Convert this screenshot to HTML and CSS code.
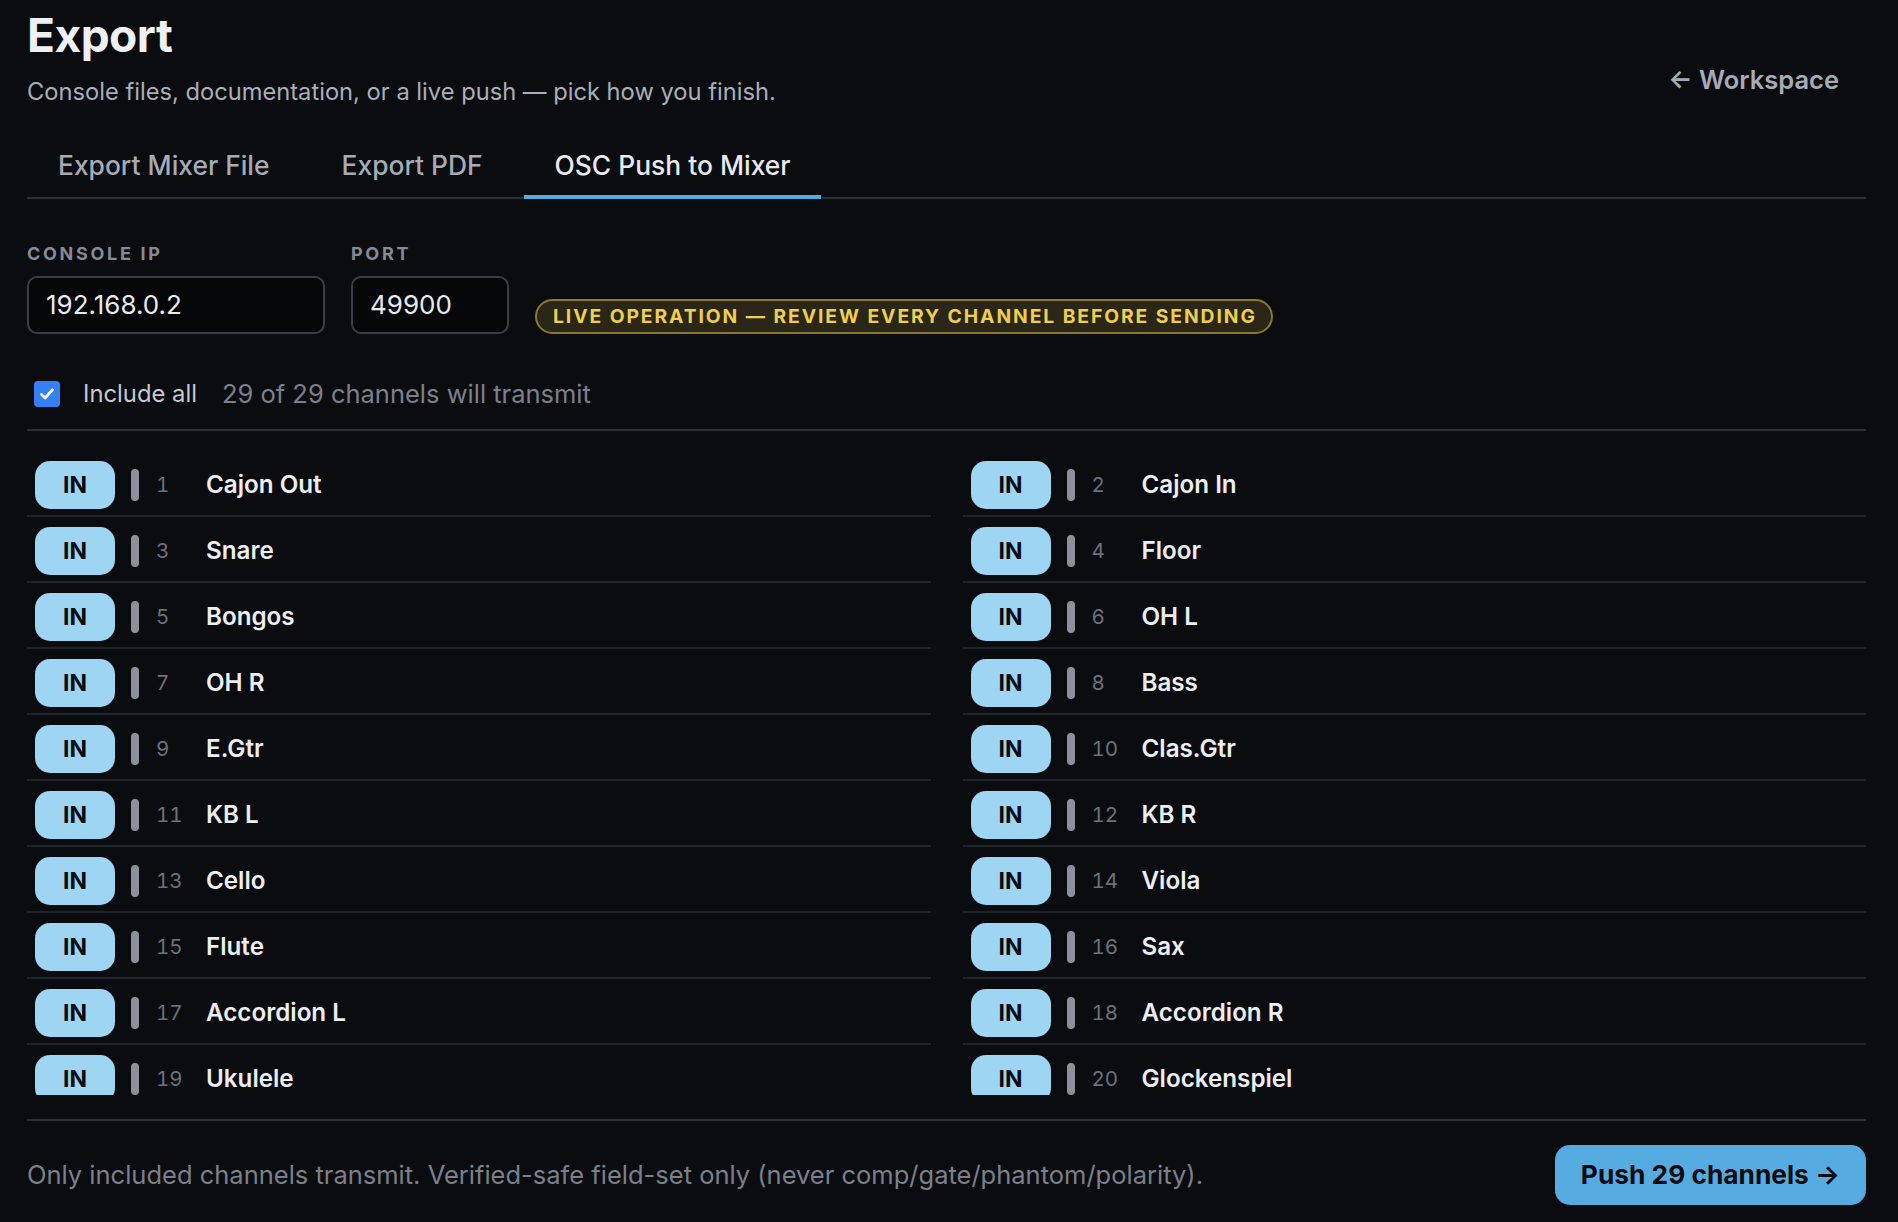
FILE: index.html
```html
<!DOCTYPE html>
<html lang="en">
<head>
  <meta charset="UTF-8">
  <meta name="viewport" content="width=device-width, initial-scale=1.0">
  <title>Export</title>
  <link rel="stylesheet" href="styles.css">
</head>
<body>
  <div class="page">
    <header class="header">
      <div>
        <h1 class="title">Export</h1>
        <p class="subtitle">Console files, documentation, or a live push — pick how you finish.</p>
      </div>
      <a class="back-link" href="#">← Workspace</a>
    </header>

    <nav class="tabs">
      <button class="tab">Export Mixer File</button>
      <button class="tab">Export PDF</button>
      <button class="tab active">OSC Push to Mixer</button>
    </nav>

    <div class="connection">
      <label class="field">
        <span class="field-label">Console IP</span>
        <input class="field-input ip" type="text" value="192.168.0.2">
      </label>
      <label class="field">
        <span class="field-label">Port</span>
        <input class="field-input port" type="text" value="49900">
      </label>
      <span class="warning">Live operation — review every channel before sending</span>
    </div>

    <div class="include-row">
      <span class="check">
        <svg width="18" height="18" viewBox="0 0 18 18"><path d="M3.5 9.5 L7.2 13 L14.5 4.8" fill="none" stroke="#fff" stroke-width="2.8" stroke-linecap="round" stroke-linejoin="round"/></svg>
      </span>
      <span class="include-label">Include all</span>
      <span class="include-count">29 of 29 channels will transmit</span>
    </div>

    <div class="channels">
      <div class="channel"><button class="in-btn">IN</button><span class="bar"></span><span class="num">1</span><span class="name">Cajon Out</span></div>
      <div class="channel"><button class="in-btn">IN</button><span class="bar"></span><span class="num">2</span><span class="name">Cajon In</span></div>
      <div class="channel"><button class="in-btn">IN</button><span class="bar"></span><span class="num">3</span><span class="name">Snare</span></div>
      <div class="channel"><button class="in-btn">IN</button><span class="bar"></span><span class="num">4</span><span class="name">Floor</span></div>
      <div class="channel"><button class="in-btn">IN</button><span class="bar"></span><span class="num">5</span><span class="name">Bongos</span></div>
      <div class="channel"><button class="in-btn">IN</button><span class="bar"></span><span class="num">6</span><span class="name">OH L</span></div>
      <div class="channel"><button class="in-btn">IN</button><span class="bar"></span><span class="num">7</span><span class="name">OH R</span></div>
      <div class="channel"><button class="in-btn">IN</button><span class="bar"></span><span class="num">8</span><span class="name">Bass</span></div>
      <div class="channel"><button class="in-btn">IN</button><span class="bar"></span><span class="num">9</span><span class="name">E.Gtr</span></div>
      <div class="channel"><button class="in-btn">IN</button><span class="bar"></span><span class="num">10</span><span class="name">Clas.Gtr</span></div>
      <div class="channel"><button class="in-btn">IN</button><span class="bar"></span><span class="num">11</span><span class="name">KB L</span></div>
      <div class="channel"><button class="in-btn">IN</button><span class="bar"></span><span class="num">12</span><span class="name">KB R</span></div>
      <div class="channel"><button class="in-btn">IN</button><span class="bar"></span><span class="num">13</span><span class="name">Cello</span></div>
      <div class="channel"><button class="in-btn">IN</button><span class="bar"></span><span class="num">14</span><span class="name">Viola</span></div>
      <div class="channel"><button class="in-btn">IN</button><span class="bar"></span><span class="num">15</span><span class="name">Flute</span></div>
      <div class="channel"><button class="in-btn">IN</button><span class="bar"></span><span class="num">16</span><span class="name">Sax</span></div>
      <div class="channel"><button class="in-btn">IN</button><span class="bar"></span><span class="num">17</span><span class="name">Accordion L</span></div>
      <div class="channel"><button class="in-btn">IN</button><span class="bar"></span><span class="num">18</span><span class="name">Accordion R</span></div>
      <div class="channel"><button class="in-btn">IN</button><span class="bar"></span><span class="num">19</span><span class="name">Ukulele</span></div>
      <div class="channel"><button class="in-btn">IN</button><span class="bar"></span><span class="num">20</span><span class="name">Glockenspiel</span></div>
    </div>

    <footer class="footer">
      <p class="footer-note">Only included channels transmit. Verified-safe field-set only (never comp/gate/phantom/polarity).</p>
      <button class="push-btn">Push 29 channels →</button>
    </footer>
  </div>
</body>
</html>
```

FILE: styles.css
```css
/* Base */
body {
  margin: 0;
  background: #0b0c10;
  color: #eceef2;
  font-family: Inter, "Noto Sans", sans-serif;
}
button, input {
  font-family: inherit;
}
.page {
  height: 1222px;
  box-sizing: border-box;
  padding: 8px 32px 0 27px;
  display: flex;
  flex-direction: column;
  overflow: hidden;
}

/* Header */
.header {
  display: flex;
  justify-content: space-between;
  align-items: flex-start;
}
.title {
  margin: 0;
  font-size: 46px;
  line-height: 1.2;
  font-weight: 700;
  letter-spacing: -0.5px;
  color: #eef0f4;
}
.subtitle {
  margin: 14px 0 0;
  font-size: 23.7px;
  line-height: 1.3;
  color: #a9aeb8;
}
.back-link {
  margin: 57px 27px 0 0;
  font-size: 25.5px;
  line-height: 1.2;
  font-weight: 600;
  color: #a6abb5;
  text-decoration: none;
}

/* Tabs */
.tabs {
  display: flex;
  gap: 10px;
  margin-top: 30px;
  border-bottom: 2px solid #2a2f38;
}
.tab {
  background: none;
  border: none;
  border-bottom: 4px solid transparent;
  margin-bottom: -2px;
  padding: 12px 31px 14px;
  font-size: 26.4px;
  line-height: 31px;
  font-weight: 500;
  color: #a6abb5;
  cursor: pointer;
}
.tab.active {
  color: #e8eaee;
  border-bottom-color: #55abe0;
}

/* Connection fields */
.connection {
  display: flex;
  align-items: flex-end;
  gap: 26px;
  margin-top: 44px;
}
.field {
  display: flex;
  flex-direction: column;
}
.field-label {
  margin-bottom: 11px;
  font-size: 18px;
  line-height: 1.2;
  font-weight: 700;
  letter-spacing: 0.15em;
  text-transform: uppercase;
  color: #858a94;
}
.field-input {
  box-sizing: border-box;
  height: 58px;
  padding: 0 17px;
  background: #050608;
  border: 2px solid #3a3e46;
  border-radius: 10px;
  font-size: 26px;
  color: #e8eaee;
  outline: none;
}
.field-input.ip { width: 298px; }
.field-input.port { width: 158px; }
.warning {
  box-sizing: border-box;
  height: 35px;
  display: flex;
  align-items: center;
  padding: 0 14px 0 16px;
  background: #2a2718;
  border: 2px solid #8c7a2c;
  border-radius: 18px;
  font-size: 19.3px;
  font-weight: 700;
  letter-spacing: 0.1em;
  text-transform: uppercase;
  color: #f0cf4e;
}

/* Include all */
.include-row {
  display: flex;
  align-items: center;
  margin-top: 47px;
  padding: 0 0 22px 7px;
  border-bottom: 2px solid #2a2e35;
  line-height: 26px;
}
.check {
  width: 26px;
  height: 26px;
  border-radius: 4px;
  background: #3580f5;
  display: flex;
  align-items: center;
  justify-content: center;
}
.include-label {
  margin-left: 23px;
  font-size: 23.8px;
  color: #c4c8cf;
}
.include-count {
  margin-left: 25px;
  font-size: 25.5px;
  color: #7b808a;
}

/* Channel list */
.channels {
  display: grid;
  grid-template-columns: 1fr 1fr;
  column-gap: 32px;
  align-content: start;
  margin-top: 20px;
  height: 644px;
  overflow: hidden;
}
.channel {
  display: flex;
  align-items: center;
  padding: 10px 8px 6px;
  border-bottom: 2px solid #1f232a;
}
.in-btn {
  width: 80px;
  height: 48px;
  border: none;
  border-radius: 15px;
  background: #9dd5f3;
  color: #0b0c10;
  font-size: 23px;
  font-weight: 700;
  cursor: pointer;
}
.bar {
  width: 8px;
  height: 32px;
  margin-left: 16px;
  border-radius: 4px;
  background: #8b909a;
}
.num {
  width: 36px;
  margin-left: 17px;
  font-size: 20.5px;
  font-variant-numeric: tabular-nums;
  color: #6c717b;
}
.name {
  margin-left: 14px;
  font-size: 24.2px;
  font-weight: 600;
  color: #eceef2;
}

/* Footer */
.footer {
  display: flex;
  justify-content: space-between;
  align-items: center;
  margin-top: 24px;
  padding-top: 24px;
  border-top: 2px solid #2a2e35;
}
.footer-note {
  margin: 0;
  font-size: 25.5px;
  color: #7b808a;
}
.push-btn {
  height: 60px;
  width: 311px;
  border: none;
  border-radius: 15px;
  background: #56ace0;
  color: #0b0c10;
  font-size: 26.3px;
  font-weight: 700;
  cursor: pointer;
}
```
